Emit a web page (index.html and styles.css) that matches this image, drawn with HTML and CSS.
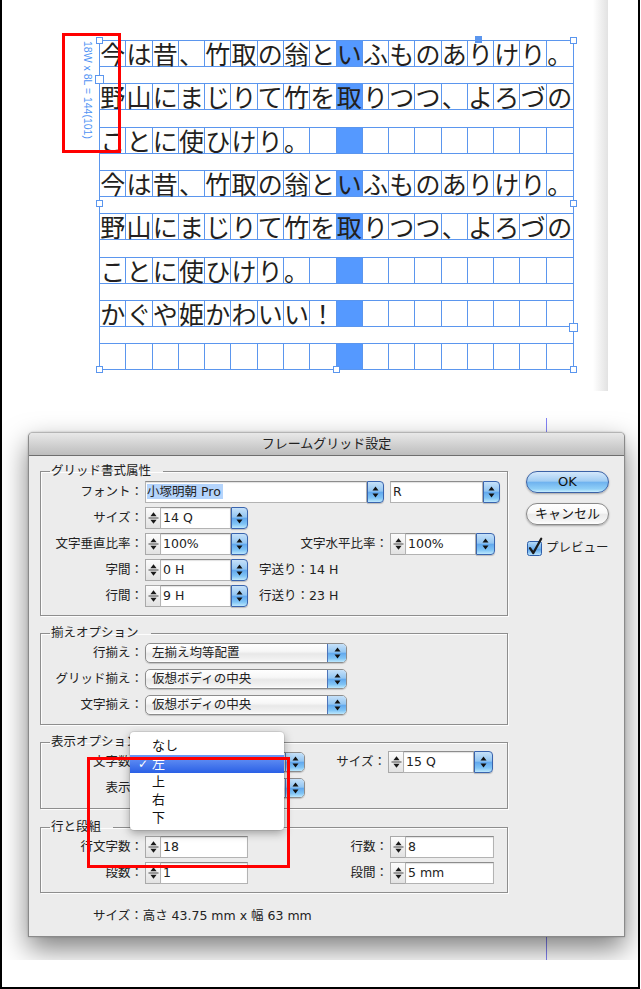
FILE: index.html
```html
<!DOCTYPE html>
<html lang="ja">
<head>
<meta charset="utf-8">
<title>フレームグリッド設定</title>
<link rel="stylesheet" href="styles.css">
</head>
<body>
<svg class="defs" width="0" height="0" aria-hidden="true">
  <defs>
    <symbol id="arr" viewBox="0 0 7 12"><path d="M0.5 4.6L3.5 0.6L6.5 4.6ZM0.5 7.4L6.5 7.4L3.5 11.4Z" fill="#111"/></symbol>
    <symbol id="stp" viewBox="0 0 13 20"><path d="M3.4 8.2L6.5 4.2L9.6 8.2ZM3.4 11.8L9.6 11.8L6.5 15.8Z" fill="#1a1a1a"/><rect x="1.5" y="9.5" width="10" height="1" fill="#444"/></symbol>
    <linearGradient id="cbg" x1="0" y1="0" x2="0" y2="1">
      <stop offset="0" stop-color="#b9dcf8"/><stop offset="0.5" stop-color="#71b2ee"/><stop offset="0.55" stop-color="#5aa3ea"/><stop offset="1" stop-color="#bfe8fd"/>
    </linearGradient>
  </defs>
</svg>
<div class="screen">
  <div class="page">
    <div class="gridlabel">18W x 8L = 144(101)</div>
    <div class="frame">
      <div class="row"><span>今</span><span>は</span><span>昔</span><span>、</span><span>竹</span><span>取</span><span>の</span><span>翁</span><span>と</span><span>い</span><span>ふ</span><span>も</span><span>の</span><span>あ</span><span>り</span><span>け</span><span>り</span><span>。</span></div>
      <div class="row"><span>野</span><span>山</span><span>に</span><span>ま</span><span>じ</span><span>り</span><span>て</span><span>竹</span><span>を</span><span>取</span><span>り</span><span>つ</span><span>つ</span><span>、</span><span>よ</span><span>ろ</span><span>づ</span><span>の</span></div>
      <div class="row"><span>こ</span><span>と</span><span>に</span><span>使</span><span>ひ</span><span>け</span><span>り</span><span>。</span><span></span><span></span><span></span><span></span><span></span><span></span><span></span><span></span><span></span><span></span></div>
      <div class="row"><span>今</span><span>は</span><span>昔</span><span>、</span><span>竹</span><span>取</span><span>の</span><span>翁</span><span>と</span><span>い</span><span>ふ</span><span>も</span><span>の</span><span>あ</span><span>り</span><span>け</span><span>り</span><span>。</span></div>
      <div class="row"><span>野</span><span>山</span><span>に</span><span>ま</span><span>じ</span><span>り</span><span>て</span><span>竹</span><span>を</span><span>取</span><span>り</span><span>つ</span><span>つ</span><span>、</span><span>よ</span><span>ろ</span><span>づ</span><span>の</span></div>
      <div class="row"><span>こ</span><span>と</span><span>に</span><span>使</span><span>ひ</span><span>け</span><span>り</span><span>。</span><span></span><span></span><span></span><span></span><span></span><span></span><span></span><span></span><span></span><span></span></div>
      <div class="row"><span>か</span><span>ぐ</span><span>や</span><span>姫</span><span>か</span><span>わ</span><span>い</span><span>い</span><span>！</span><span></span><span></span><span></span><span></span><span></span><span></span><span></span><span></span><span></span></div>
      <div class="row"><span></span><span></span><span></span><span></span><span></span><span></span><span></span><span></span><span></span><span></span><span></span><span></span><span></span><span></span><span></span><span></span><span></span><span></span></div>
      <i class="hd h-tl"></i><i class="hd fill h-tm"></i><i class="hd h-tr"></i>
      <i class="hd big h-lin"></i><i class="hd h-lm"></i><i class="hd h-rm"></i>
      <i class="hd big h-rout"></i><i class="hd h-bl"></i><i class="hd h-bm"></i><i class="hd h-br"></i>
    </div>
  </div>

  <div class="desk">
    <div class="guide"></div>
    <div class="dialog">
      <div class="title">フレームグリッド設定</div>
      <div class="dbody">
        <div class="left">
          <fieldset class="grp g1">
            <legend>グリッド書式属性</legend>
            <div class="r">
              <span class="lab">フォント：</span>
              <div class="combo"><span class="fld w222 fsel"><span class="sel">小塚明朝 Pro</span></span><span class="bb"><svg class="ar"><use href="#arr"/></svg></span></div>
              <div class="combo gap6"><span class="fld w93">R</span><span class="bb"><svg class="ar"><use href="#arr"/></svg></span></div>
            </div>
            <div class="r">
              <span class="lab">サイズ：</span>
              <div class="spin"><span class="st"><svg class="sp"><use href="#stp"/></svg></span><span class="fld w71">14 Q</span><span class="bb"><svg class="ar"><use href="#arr"/></svg></span></div>
            </div>
            <div class="r">
              <span class="lab">文字垂直比率：</span>
              <div class="spin"><span class="st"><svg class="sp"><use href="#stp"/></svg></span><span class="fld w71">100%</span><span class="bb"><svg class="ar"><use href="#arr"/></svg></span></div>
              <span class="lab2">文字水平比率：</span>
              <div class="spin"><span class="st"><svg class="sp"><use href="#stp"/></svg></span><span class="fld w71">100%</span><span class="bb bb19"><svg class="ar"><use href="#arr"/></svg></span></div>
            </div>
            <div class="r">
              <span class="lab">字間：</span>
              <div class="spin"><span class="st"><svg class="sp"><use href="#stp"/></svg></span><span class="fld w71">0 H</span><span class="bb"><svg class="ar"><use href="#arr"/></svg></span></div>
              <span class="note">字送り：14 H</span>
            </div>
            <div class="r">
              <span class="lab">行間：</span>
              <div class="spin"><span class="st"><svg class="sp"><use href="#stp"/></svg></span><span class="fld w71">9 H</span><span class="bb"><svg class="ar"><use href="#arr"/></svg></span></div>
              <span class="note">行送り：23 H</span>
            </div>
          </fieldset>

          <fieldset class="grp g2">
            <legend>揃えオプション</legend>
            <div class="r"><span class="lab">行揃え：</span><div class="pop w202"><span class="pt">左揃え均等配置</span><span class="pb"><svg class="ar"><use href="#arr"/></svg></span></div></div>
            <div class="r"><span class="lab">グリッド揃え：</span><div class="pop w202"><span class="pt">仮想ボディの中央</span><span class="pb"><svg class="ar"><use href="#arr"/></svg></span></div></div>
            <div class="r"><span class="lab">文字揃え：</span><div class="pop w202"><span class="pt">仮想ボディの中央</span><span class="pb"><svg class="ar"><use href="#arr"/></svg></span></div></div>
          </fieldset>

          <fieldset class="grp g3">
            <legend>表示オプション</legend>
            <div class="r">
              <span class="lab">文字数：</span>
              <div class="pop w160"><span class="pt"></span><span class="pb"><svg class="ar"><use href="#arr"/></svg></span></div>
              <span class="lab2 n">サイズ：</span>
              <div class="spin"><span class="st"><svg class="sp"><use href="#stp"/></svg></span><span class="fld w71">15 Q</span><span class="bb bb19"><svg class="ar"><use href="#arr"/></svg></span></div>
            </div>
            <div class="r">
              <span class="lab">表示：</span>
              <div class="pop w160"><span class="pt"></span><span class="pb"><svg class="ar"><use href="#arr"/></svg></span></div>
            </div>
          </fieldset>

          <fieldset class="grp g4">
            <legend>行と段組</legend>
            <div class="r">
              <span class="lab">行文字数：</span>
              <div class="spin"><span class="st"><svg class="sp"><use href="#stp"/></svg></span><span class="fld w88">18</span></div>
              <span class="lab2">行数：</span>
              <div class="spin"><span class="st"><svg class="sp"><use href="#stp"/></svg></span><span class="fld w89">8</span></div>
            </div>
            <div class="r">
              <span class="lab">段数：</span>
              <div class="spin"><span class="st"><svg class="sp"><use href="#stp"/></svg></span><span class="fld w88">1</span></div>
              <span class="lab2">段間：</span>
              <div class="spin"><span class="st"><svg class="sp"><use href="#stp"/></svg></span><span class="fld w89">5 mm</span></div>
            </div>
          </fieldset>

          <div class="sum">サイズ：高さ 43.75 mm x 幅 63 mm</div>
        </div>

        <div class="right">
          <div class="okb">OK</div>
          <div class="cnb">キャンセル</div>
          <div class="chk">
            <svg class="cbx" width="18" height="20" viewBox="0 0 18 20"><rect x="0.5" y="4.5" width="14" height="14" rx="2" fill="url(#cbg)" stroke="#2f5ea9"/><path d="M3 11.2L6.3 16L14.2 1.8" fill="none" stroke="#1b1b1b" stroke-width="2.3" stroke-linecap="round" stroke-linejoin="round"/></svg>
            <span>プレビュー</span>
          </div>
        </div>
      </div>

      <div class="menu">
        <div class="mi"><span class="ck"></span>なし</div>
        <div class="mi on"><span class="ck">✓</span>左</div>
        <div class="mi"><span class="ck"></span>上</div>
        <div class="mi"><span class="ck"></span>右</div>
        <div class="mi"><span class="ck"></span>下</div>
      </div>
    </div>
  </div>

  <div class="red red1"></div>
  <div class="red red2"></div>
</div>
</body>
</html>
```

FILE: styles.css
```css
html, body {
  margin: 0;
  padding: 0;
  background: #fff;
}

.defs {
  position: absolute;
  width: 0;
  height: 0;
  overflow: hidden;
}

.screen {
  position: relative;
  width: 640px;
  height: 989px;
  box-sizing: border-box;
  border-left: 2px solid #000;
  border-right: 2px solid #000;
  border-bottom: 2px solid #000;
  overflow: hidden;
  background: #fff;
  font-family: "DejaVu Sans", "Noto Sans CJK JP", sans-serif;
}

/* ---------- layout page with frame grid ---------- */
.page {
  width: 606px;
  height: 391px;
  box-sizing: border-box;
  padding: 40px 0 0 80px;
  display: flex;
  align-items: flex-start;
  background: linear-gradient(to right, #fff 0, #fff 591px, #e2e2e2 606px);
}

.gridlabel {
  writing-mode: vertical-rl;
  font-family: "Liberation Sans", Arial, sans-serif;
  font-size: 10.5px;
  line-height: 11px;
  width: 11px;
  color: #4f93f4;
  white-space: nowrap;
  margin-right: 6px;
  margin-top: 1px;
}

.frame {
  position: relative;
  width: 475px;
  box-sizing: border-box;
  border-left: 1px solid #5b96ee;
  border-right: 1px solid #5b96ee;
  display: flex;
  flex-direction: column;
  gap: 16.33px;
}

.row {
  display: grid;
  grid-template-columns: repeat(18, minmax(0, 1fr));
  height: 27px;
  box-sizing: border-box;
  border-top: 1px solid #5b96ee;
  border-bottom: 1px solid #5b96ee;
}

.row span {
  border-right: 1px solid #5b96ee;
  font-family: "Noto Sans CJK JP", sans-serif;
  font-weight: 400;
  font-size: 25px;
  line-height: 25px;
  color: #231f20;
  text-align: center;
  white-space: nowrap;
}

.row span:last-child {
  border-right: 0;
}

.row span:nth-child(10) {
  background: #5599ff;
}

.hd {
  position: absolute;
  width: 7px;
  height: 7px;
  box-sizing: border-box;
  border: 1px solid #5b96ee;
  background: #fff;
}
.hd.big { width: 9px; height: 9px; }
.hd.fill { background: #5b96ee; }

.h-tl { left: -4px; top: -3px; }
.h-tm { left: 375px; top: -4px; }
.h-tr { left: 470px; top: -3px; }
.h-lin { left: -5px; top: 35px; }
.h-lm { left: -4px; top: 160px; }
.h-rm { left: 470px; top: 160px; }
.h-rout { left: 469px; top: 283px; }
.h-bl { left: -4px; top: 326px; }
.h-bm { left: 233px; top: 326px; }
.h-br { left: 470px; top: 326px; }

/* ---------- desktop with dialog ---------- */
.desk {
  position: relative;
  height: 569px;
  box-sizing: border-box;
  padding: 41px 0 0 26px;
  overflow: hidden;
}

.guide {
  position: absolute;
  left: 544px;
  top: 27px;
  width: 1px;
  height: 545px;
  background: #8383f6;
}

.dialog {
  position: relative;
  width: 597px;
  box-sizing: border-box;
  background: #ececec;
  border: 1px solid #8a8a8a;
  border-top-color: #b4b4b4;
  border-radius: 5px 5px 0 0;
  box-shadow: 0 12px 28px rgba(0, 0, 0, 0.5), 0 0 2px rgba(0, 0, 0, 0.25);
  font-size: 12.5px;
  color: #222;
}

.title {
  height: 22px;
  line-height: 22px;
  text-align: center;
  font-size: 13px;
  color: #222;
  background: linear-gradient(#e8e8e8, #bdbdbd);
  border-bottom: 1px solid #6e6e6e;
  border-radius: 4px 4px 0 0;
}

.dbody {
  display: flex;
  padding: 8px 0 12px 11px;
}

.left {
  width: 468px;
}

.right {
  width: 83px;
  margin-left: 18px;
  padding-top: 7px;
}

/* group boxes */
.grp {
  margin: 0;
  padding: 1px 0 6px 0;
  min-width: 0;
  border: 1px solid #8e8e8e;
  box-shadow: 1px 1px 0 #fdfdfd, inset 1px 1px 0 #fdfdfd;
}
.g1 { padding-top: 1px; }
.g2 { margin-top: 10px; padding-top: 0; }
.g3 { margin-top: 10px; padding-top: 0; padding-bottom: 7px; }
.g4 { margin-top: 11px; padding-top: 0; }

.grp legend {
  margin-left: 9px;
  padding: 0 12px 0 1px;
  font-size: 12.5px;
  line-height: 14px;
  color: #222;
}

.r {
  display: flex;
  align-items: center;
  height: 26px;
  white-space: nowrap;
}

.lab {
  width: 102px;
  margin-right: 2px;
  text-align: right;
  line-height: 16px;
}

.lab2 {
  width: 140px;
  margin-right: 2px;
  text-align: right;
  line-height: 16px;
}
.lab2.n { width: 81px; }

.note {
  margin-left: 11px;
  line-height: 16px;
}

/* controls */
.combo, .spin {
  display: flex;
  height: 22px;
}
.gap6 { margin-left: 6px; }

.st {
  width: 15px;
  height: 22px;
  box-sizing: border-box;
  border: 1px solid #a9a9a9;
  border-right: 0;
  background: linear-gradient(#fcfcfc, #e2e2e2);
  display: flex;
  align-items: center;
  justify-content: center;
}
.sp { width: 13px; height: 20px; }

.fld {
  height: 22px;
  box-sizing: border-box;
  border: 1px solid #b3b3b3;
  border-top-color: #8c8c8c;
  background: #fff;
  box-shadow: inset 0 1px 1px rgba(0, 0, 0, 0.12);
  padding-left: 2px;
  line-height: 20px;
  overflow: hidden;
  white-space: nowrap;
}
.fsel { padding-left: 1px; }
.sel { background: #b4d4fc; padding-right: 2px; }

.w71 { width: 71px; }
.w88 { width: 88px; }
.w89 { width: 89px; }
.w93 { width: 93px; }
.w222 { width: 222px; }

.bb {
  width: 17px;
  height: 22px;
  box-sizing: border-box;
  border: 1px solid #3a64ad;
  border-radius: 0 4px 4px 0;
  background: linear-gradient(#c6e1f9 0%, #93c6f2 45%, #62a9ee 52%, #80c4f5 80%, #bde8fd 100%);
  display: flex;
  align-items: center;
  justify-content: center;
  box-shadow: 0 1px 1px rgba(0, 0, 0, 0.2);
}
.bb19 { width: 19px; }
.ar { width: 7px; height: 12px; }

.pop {
  display: flex;
  height: 20px;
  box-sizing: border-box;
  border: 1px solid #8c8c8c;
  border-radius: 5px;
  overflow: hidden;
  background: linear-gradient(#ffffff 0%, #f7f7f7 40%, #e8e8e8 55%, #f3f3f3 90%, #fff 100%);
  box-shadow: 0 1px 1px rgba(0, 0, 0, 0.18);
}
.w202 { width: 202px; }
.w160 { width: 160px; }
.pt {
  flex: 1;
  padding-left: 6px;
  line-height: 18px;
  overflow: hidden;
}
.pb {
  width: 18px;
  border-left: 1px solid #4e74b8;
  background: linear-gradient(#c6e1f9 0%, #93c6f2 45%, #62a9ee 52%, #80c4f5 80%, #bde8fd 100%);
  display: flex;
  align-items: center;
  justify-content: center;
}

.sum {
  margin-top: 15px;
  padding-left: 53px;
  line-height: 16px;
  white-space: nowrap;
}

/* buttons */
.okb, .cnb {
  height: 22px;
  box-sizing: border-box;
  border-radius: 11px;
  text-align: center;
  line-height: 20px;
  font-size: 13px;
  color: #111;
  box-shadow: 0 1px 2px rgba(0, 0, 0, 0.3);
}
.okb {
  border: 1px solid #3b62a6;
  background: linear-gradient(#d4e8fb 0%, #a2cdf3 45%, #70b3ef 52%, #8fcff7 85%, #c8eefe 100%);
}
.cnb {
  margin-top: 10px;
  border: 1px solid #8a8a8a;
  background: linear-gradient(#ffffff 0%, #f8f8f8 45%, #eaeaea 52%, #f5f5f5 85%, #fff 100%);
}

.chk {
  display: flex;
  align-items: flex-end;
  margin-top: 12px;
  margin-left: 1px;
  height: 20px;
}
.cbx { display: block; }
.chk span {
  margin-left: 1px;
  line-height: 16px;
  padding-bottom: 1px;
}

/* open popup menu */
.menu {
  position: absolute;
  left: 101px;
  top: 299px;
  width: 154px;
  box-sizing: border-box;
  padding: 5px 0 3px;
  background: #fff;
  border-radius: 4px;
  box-shadow: 0 3px 10px rgba(0, 0, 0, 0.35), 0 0 0 1px rgba(0, 0, 0, 0.08);
  font-size: 13px;
}
.mi {
  height: 18px;
  line-height: 18px;
  color: #111;
  white-space: nowrap;
}
.mi .ck {
  display: inline-block;
  width: 22px;
  text-indent: 8px;
  font-size: 12px;
}
.mi.on {
  background: linear-gradient(#6c98f6, #2a60e6);
  color: #fff;
}

/* red annotation boxes */
.red {
  position: absolute;
  box-sizing: border-box;
  border: 3px solid #f00;
}
.red1 { left: 60px; top: 33px; width: 59px; height: 120px; }
.red2 { left: 85px; top: 757px; width: 203px; height: 111px; }
```
